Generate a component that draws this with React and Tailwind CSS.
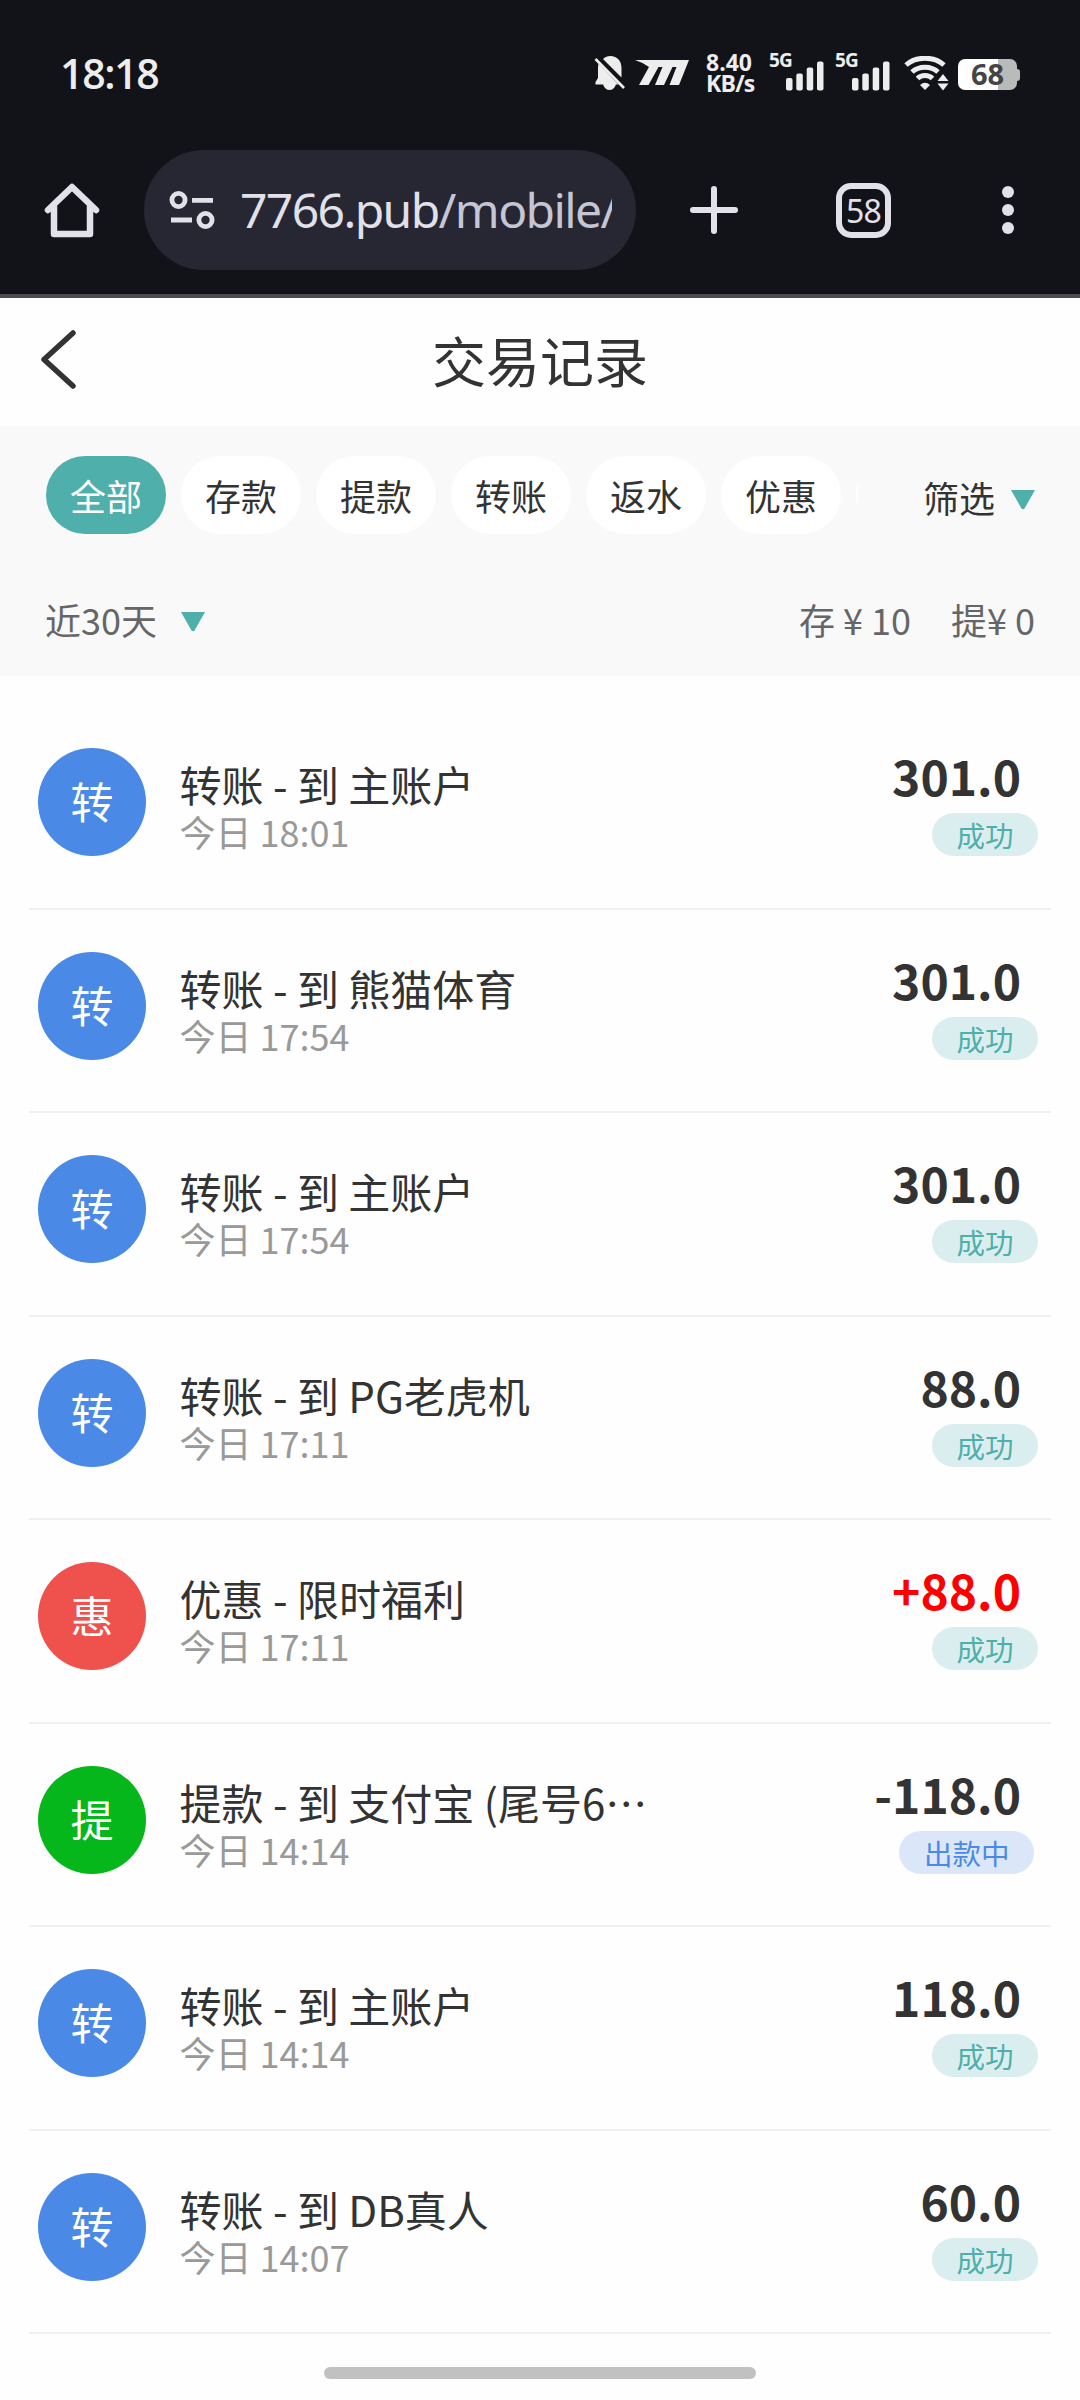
const FONT = "font-['Noto_Sans_CJK_SC',sans-serif]";

const tabs = ['全部', '存款', '提款', '转账', '返水', '优惠', ''];

const records = [
  { type: '转', title: '转账 - 到 主账户', time: '今日 18:01', amount: '301.0', status: '成功' },
  { type: '转', title: '转账 - 到 熊猫体育', time: '今日 17:54', amount: '301.0', status: '成功' },
  { type: '转', title: '转账 - 到 主账户', time: '今日 17:54', amount: '301.0', status: '成功' },
  { type: '转', title: '转账 - 到 PG老虎机', time: '今日 17:11', amount: '88.0', status: '成功' },
  { type: '惠', title: '优惠 - 限时福利', time: '今日 17:11', amount: '+88.0', status: '成功' },
  { type: '提', title: '提款 - 到 支付宝 (尾号6⋯', time: '今日 14:14', amount: '-118.0', status: '出款中' },
  { type: '转', title: '转账 - 到 主账户', time: '今日 14:14', amount: '118.0', status: '成功' },
  { type: '转', title: '转账 - 到 DB真人', time: '今日 14:07', amount: '60.0', status: '成功' },
];

const avatarColors = {
  转: 'bg-[#4a8ae6]',
  惠: 'bg-[#ef514d]',
  提: 'bg-[#06b71b]',
};

function Signal() {
  return (
    <div className="relative w-[55px] h-[37px] text-[#ededed]">
      <span className="absolute left-0 -top-px text-[19px] leading-[14px] font-bold tracking-[-0.8px] font-['Open_Sans',sans-serif]">5G</span>
      <svg className="absolute left-[17px] top-[7px]" width="38" height="30" viewBox="0 0 38 30" fill="currentColor">
        <rect x="0" y="17" width="6.5" height="12.5" rx="2" />
        <rect x="10.3" y="12.5" width="6.5" height="17" rx="2" />
        <rect x="20.7" y="6.5" width="6.5" height="23" rx="2" />
        <rect x="31" y="0.5" width="6.5" height="29" rx="2" />
      </svg>
    </div>
  );
}

function StatusBar() {
  return (
    <div className="h-[150px] pt-[51px] pl-[60px] pr-[60px] flex justify-between text-[#ededed]">
      <div className="text-[41px] leading-[44px] font-semibold tracking-[-1.3px] font-['Open_Sans',sans-serif]">18:18</div>
      <div className="flex items-start pt-[3px]">
        <svg className="mt-px" width="32" height="37" viewBox="0 0 32 37" fill="#ededed">
          <path d="M9 4 C13 -0.5 21 0 25 5 C27 8 27.5 10 27.5 14 V22.5 Z" />
          <path d="M4.5 8.5 L24.5 29.5 H1.5 V27 L4 23 V12 Z" />
          <path d="M9 29 H22 C20 37 11 37 9 29 Z" />
          <path d="M1.5 4 L30 33" stroke="#ededed" strokeWidth="2.6" />
        </svg>
        <svg className="mt-[6px] ml-[9px]" width="55" height="26" viewBox="0 0 55 26" fill="#ededed">
          <path d="M0 0 H54 L44 25 H34.5 L41.5 7 H37.5 L29 25 H20 L27.5 7 H23.5 L13.5 25 H4 L14 7 Q8 2.5 0 0 Z" />
        </svg>
        <div className="ml-[16px] -mt-[2px] w-[50px] text-[23px] leading-[21px] font-bold font-['Open_Sans',sans-serif] whitespace-nowrap">
          <div>8.40</div>
          <div className="tracking-[-0.8px]">KB/s</div>
        </div>
        <div className="ml-[13px] flex gap-[11px]">
          <Signal />
          <Signal />
        </div>
        <svg className="ml-[14px] mt-[2px]" width="46" height="35" viewBox="0 0 46 35" fill="none" stroke="#ededed" strokeWidth="5">
          <path d="M2 9 C12 0 30 0 40 9" />
          <path d="M8 16 C15 9.5 27 9.5 34 16" />
          <path d="M13.5 22.5 C17.5 18.5 24.5 18.5 28.5 22.5" />
          <path d="M16 29 Q21 24.5 26 29 L21 34 Z" fill="#ededed" stroke="none" />
          <path d="M33.5 25 L39 18 L44.5 25 Z M33.5 27.5 L39 34.5 L44.5 27.5 Z" fill="#ededed" stroke="none" />
        </svg>
        <div className="ml-[8px] mt-[5px] flex items-center">
          <div className="w-[59px] h-[31px] rounded-[7px] bg-[linear-gradient(90deg,#fff_68%,#b9bbbb_68%)] text-[#454545] text-[29px] leading-[30px] text-center font-bold font-['Open_Sans',sans-serif]">68</div>
          <div className="w-[3px] h-[12px] rounded-r bg-[#b9bbbb]" />
        </div>
      </div>
    </div>
  );
}

function BrowserBar() {
  return (
    <div className="h-[144px] flex items-start">
      <svg className="ml-[44px] mt-[32px]" width="56" height="56" viewBox="0 0 56 56" fill="none" stroke="#e2e1e9" strokeWidth="6.5" strokeLinejoin="round" strokeLinecap="round">
        <path d="M4 28 L28 5 L52 28" />
        <path d="M10 25 V52 H46 V25" />
      </svg>
      <div className="ml-[44px] w-[492px] h-[120px] rounded-full bg-[#262733] flex items-center">
        <svg className="ml-[25px]" width="46" height="40" viewBox="0 0 46 40" fill="none" stroke="#e2e1e9" strokeWidth="4.8">
          <circle cx="9.5" cy="10" r="6.6" />
          <path d="M23 10.3 H44 M2 30 H23" />
          <circle cx="36.5" cy="30" r="6.6" />
        </svg>
        <div className="ml-[25px] w-[372px] overflow-hidden whitespace-nowrap text-[48px] leading-[64px] tracking-[-1.6px] text-[#e2e1e9] font-['Noto_Sans',sans-serif]">
          7766.pub<span className="text-[#c5c5d3]">/mobile/</span>
        </div>
      </div>
      <svg className="ml-[54px] mt-[36px]" width="48" height="48" viewBox="0 0 48 48" stroke="#e2e1e9" strokeWidth="6" strokeLinecap="round">
        <path d="M24 3 V45 M3 24 H45" />
      </svg>
      <div className="ml-[98px] mt-[33px] w-[55px] h-[55px] rounded-[15px] border-[6px] border-[#e2e1e9] flex items-center justify-center text-[32px] tracking-[-0.8px] text-[#e2e1e9] font-['Noto_Sans',sans-serif]">58</div>
      <svg className="ml-[111px] mt-[36px]" width="12" height="48" viewBox="0 0 12 48" fill="#e2e1e9">
        <circle cx="6" cy="6" r="6" />
        <circle cx="6" cy="24" r="6" />
        <circle cx="6" cy="42" r="6" />
      </svg>
    </div>
  );
}

function Caret() {
  return (
    <svg className="mt-[5px]" width="24" height="20" viewBox="0 0 24 20" fill="#4fafaa">
      <path d="M0 0 H24 L13.5 18.5 Q12 20 10.5 18.5 Z" />
    </svg>
  );
}

function RecordRow({ record }) {
  const pending = record.status !== '成功';
  return (
    <li className="h-[203.5px] mx-[29px] border-b-[2px] border-[#f0f0f0] flex items-start">
      <div className={`mt-[42px] ml-[9px] size-[108px] rounded-full text-white text-[43px] leading-[105px] text-center ${avatarColors[record.type]}`}>
        {record.type}
      </div>
      <div className="ml-[33.5px] mt-[48px] flex-1">
        <div className="text-[42px] leading-[60px] text-[#333]">{record.title}</div>
        <div className="text-[36px] leading-[35px] text-[#999]">{record.time}</div>
      </div>
      <div className="flex flex-col items-end mt-[39px]">
        <div className={`mr-[30px] text-[48px] leading-[60px] font-bold ${record.amount.startsWith('+') ? 'text-[#f00]' : 'text-[#333]'}`}>
          {record.amount}
        </div>
        <div
          className={`mt-[8px] h-[43px] px-[24.5px] rounded-full text-[28.5px] leading-[43px] ${
            pending ? 'mr-[17px] bg-[#dbe6f8] text-[#4a8ae6]' : 'mr-[13px] bg-[#dbeeef] text-[#4fafaa]'
          }`}
        >
          {record.status}
        </div>
      </div>
    </li>
  );
}

export default function App() {
  return (
    <div className={`w-[1080px] h-[2400px] overflow-hidden flex flex-col bg-[#fefefe] ${FONT}`}>
      {/* Phone and browser chrome */}
      <div className="h-[298px] bg-[#121318] border-b-[4px] border-[#4b4b50]">
        <StatusBar />
        <BrowserBar />
      </div>

      {/* Page header */}
      <header className="h-[128px] flex items-center">
        <svg className="ml-[40px] -mt-[5px]" width="40" height="60" viewBox="0 0 40 60" fill="none" stroke="#333" strokeWidth="5.5" strokeLinecap="round" strokeLinejoin="round">
          <path d="M33 3 L4 29.5 L33 56" />
        </svg>
        <h1 className="flex-1 mr-[80px] -mt-[4px] text-center text-[54px] leading-[80px] text-[#333]">交易记录</h1>
      </header>

      {/* Filters */}
      <section className="h-[250px] pt-[30px] px-[45px] bg-[#f9f9f9]">
        <div className="flex items-center justify-between">
          <div className="w-[813px] pl-px flex gap-[15px] overflow-hidden">
            {tabs.map((tab, i) => (
              <button
                key={i}
                className={`shrink-0 w-[120px] h-[78px] rounded-full text-[36px] leading-[77px] ${
                  i === 0 ? 'bg-[#4fafaa] text-white' : 'bg-white text-[#333]'
                }`}
              >
                {tab}
              </button>
            ))}
          </div>
          <div className="flex items-center gap-[16px] text-[36px] leading-[54px] text-[#333] pt-[4px]">
            筛选 <Caret />
          </div>
        </div>
        <div className="mt-[58px] flex justify-between text-[36px] leading-[54px] text-[#666]">
          <div className="flex items-center gap-[24px]">
            近30天 <Caret />
          </div>
          <div className="flex gap-[40px]">
            <span>存 ¥ 10</span>
            <span>提¥ 0</span>
          </div>
        </div>
      </section>

      {/* Transactions */}
      <ul className="pt-[30.4px]">
        {records.map((record, i) => (
          <RecordRow key={i} record={record} />
        ))}
      </ul>

      <div className="mt-[32.5px] mx-auto w-[432px] h-[12px] rounded-full bg-[#c1c1c1]" />
    </div>
  );
}
